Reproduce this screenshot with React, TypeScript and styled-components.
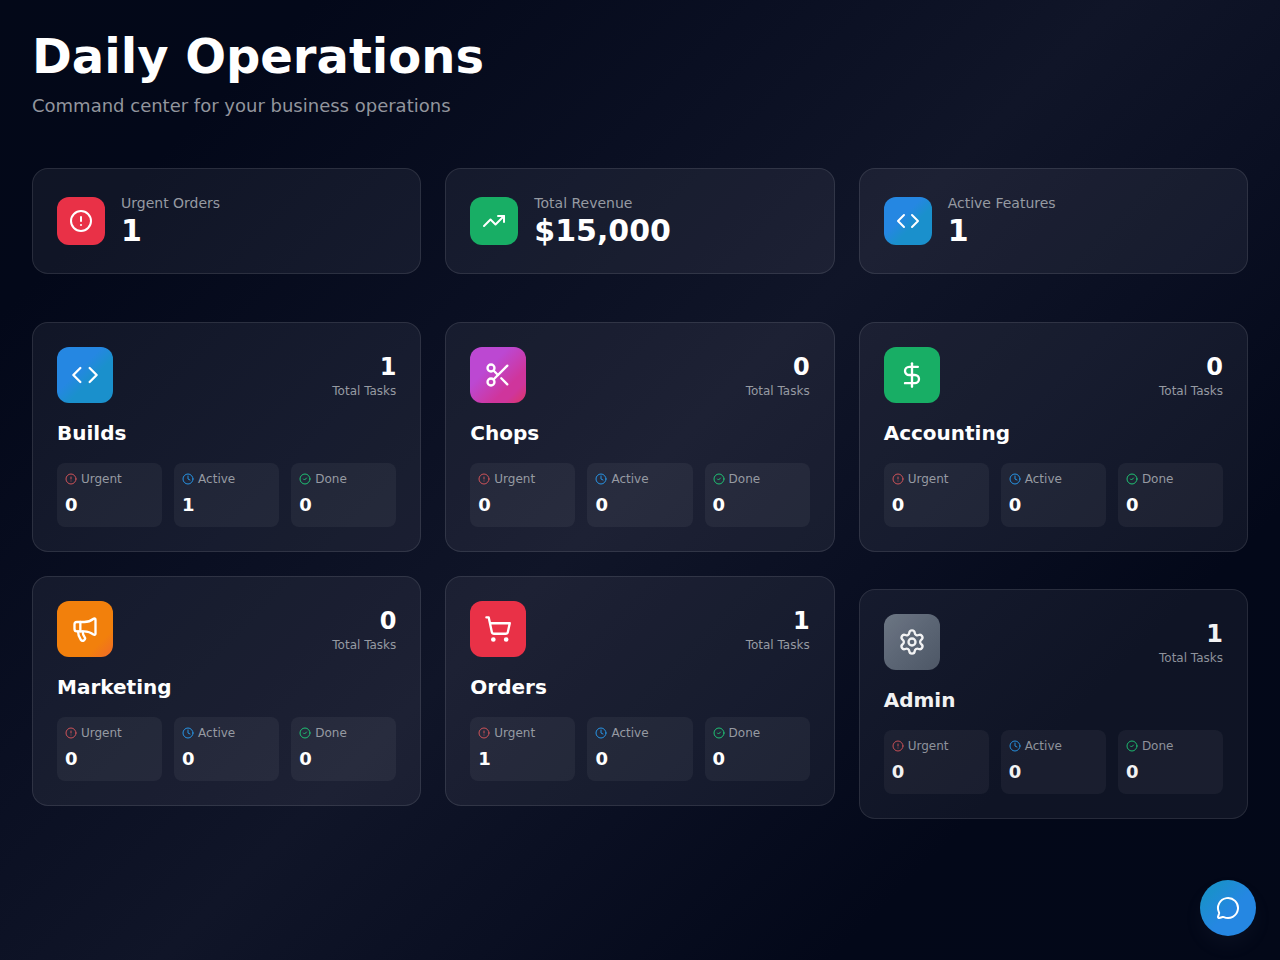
import React from "react";
import styled, { createGlobalStyle } from "styled-components";
import {
  CircleAlert,
  CircleCheck,
  Clock,
  Code,
  DollarSign,
  Megaphone,
  MessageCircle,
  Scissors,
  Settings,
  ShoppingCart,
  TrendingUp,
  type LucideIcon,
} from "lucide-react";

const tones = {
  red: "#e93147",
  green: "#18ae65",
  blue: "linear-gradient(135deg, #2587e2 0 40%, #1a90cc 60%)",
  purple: "linear-gradient(135deg, #bc48d2 0 35%, #cf359c 70% 80%, #dc3566)",
  orange: "linear-gradient(135deg, #f2800c 0 75%, #f06a2a)",
  gray: "linear-gradient(135deg, #737d8a, #626c7b 45%, #525c6b)",
};

type Tone = keyof typeof tones;

const GlobalStyle = createGlobalStyle`
  * {
    box-sizing: border-box;
  }

  body {
    margin: 0;
    background: #020617;
    color: #ffffff;
    font-family: "DejaVu Sans", sans-serif;
  }

  h1, h2, p, dl, dt, dd {
    margin: 0;
  }
`;

const Page = styled.main`
  display: flex;
  flex-direction: column;
  gap: 48px;
  min-height: 100vh;
  padding: 32px;
  background: linear-gradient(135deg, #030818 0%, #030819 14%, #0a0f22 34%, #101528 50%, #0a0f22 64%, #030819 80%, #030818 100%);
`;

const Header = styled.header`
  display: flex;
  flex-direction: column;
  gap: 12px;
`;

const Title = styled.h1`
  font-size: 48px;
  line-height: 48px;
  font-weight: 700;
`;

const Subtitle = styled.p`
  font-size: 18px;
  line-height: 28px;
  color: #92959d;
`;

const CardGrid = styled.section`
  display: grid;
  grid-template-columns: repeat(auto-fit, minmax(320px, 1fr));
  gap: 24px;
`;

const Card = styled.article<{ $entering?: boolean }>`
  padding: 24px;
  border: 1px solid rgba(255, 255, 255, 0.1);
  border-radius: 16px;
  background: rgba(240, 245, 255, 0.06);
  opacity: ${(p) => (p.$entering ? 0.95 : 1)};
  transform: ${(p) => (p.$entering ? "translateY(13px)" : "none")};
`;

const SummaryCard = styled(Card)`
  display: flex;
  align-items: center;
  gap: 16px;
`;

const IconTile = styled.div<{ $tone: Tone; $size: number }>`
  display: grid;
  place-items: center;
  flex: none;
  width: ${(p) => p.$size}px;
  height: ${(p) => p.$size}px;
  border-radius: 12px;
  background: ${(p) => tones[p.$tone]};
`;

const SummaryLabel = styled.p`
  font-size: 14px;
  line-height: 20px;
  color: #969aa2;
`;

const SummaryValue = styled.p`
  font-size: 30px;
  line-height: 36px;
  font-weight: 700;
`;

const TaskCard = styled(Card)`
  display: flex;
  flex-direction: column;
  gap: 16px;
`;

const TaskHead = styled.div`
  display: flex;
  align-items: center;
  justify-content: space-between;
`;

const Total = styled.div`
  text-align: right;
`;

const TotalValue = styled.p`
  font-size: 24px;
  line-height: 32px;
  font-weight: 700;
`;

const TotalLabel = styled.p`
  font-size: 12px;
  line-height: 16px;
  color: #969aa2;
`;

const TaskTitle = styled.h2`
  font-size: 20px;
  line-height: 28px;
  font-weight: 700;
`;

const Stats = styled.dl`
  display: grid;
  grid-template-columns: repeat(3, 1fr);
  gap: 12px;
`;

const Stat = styled.div`
  display: flex;
  flex-direction: column;
  gap: 4px;
  padding: 8px;
  border-radius: 8px;
  background: rgba(255, 255, 255, 0.05);
`;

const StatLabel = styled.dt`
  display: flex;
  align-items: center;
  gap: 4px;
  font-size: 12px;
  line-height: 16px;
  color: #969aa2;
`;

const StatValue = styled.dd`
  font-size: 18px;
  line-height: 28px;
  font-weight: 700;
`;

const ChatButton = styled.button`
  position: fixed;
  right: 24px;
  bottom: 24px;
  display: grid;
  place-items: center;
  width: 56px;
  height: 56px;
  padding: 0;
  border: 0;
  border-radius: 50%;
  color: #ffffff;
  background: linear-gradient(135deg, #1a90cc 20%, #2587e2 55%);
  box-shadow: 0 10px 20px rgba(120, 130, 160, 0.06);
  cursor: pointer;
`;

const summaries: { label: string; value: string; icon: LucideIcon; tone: Tone }[] = [
  { label: "Urgent Orders", value: "1", icon: CircleAlert, tone: "red" },
  { label: "Total Revenue", value: "$15,000", icon: TrendingUp, tone: "green" },
  { label: "Active Features", value: "1", icon: Code, tone: "blue" },
];

interface Department {
  name: string;
  icon: LucideIcon;
  tone: Tone;
  total: number;
  urgent: number;
  active: number;
  done: number;
  entering?: boolean;
}

const departments: Department[] = [
  { name: "Builds", icon: Code, tone: "blue", total: 1, urgent: 0, active: 1, done: 0 },
  { name: "Chops", icon: Scissors, tone: "purple", total: 0, urgent: 0, active: 0, done: 0 },
  { name: "Accounting", icon: DollarSign, tone: "green", total: 0, urgent: 0, active: 0, done: 0 },
  { name: "Marketing", icon: Megaphone, tone: "orange", total: 0, urgent: 0, active: 0, done: 0 },
  { name: "Orders", icon: ShoppingCart, tone: "red", total: 1, urgent: 1, active: 0, done: 0 },
  { name: "Admin", icon: Settings, tone: "gray", total: 1, urgent: 0, active: 0, done: 0, entering: true },
];

function DepartmentCard({ name, icon: Icon, tone, total, urgent, active, done, entering }: Department) {
  return (
    <TaskCard $entering={entering}>
      <TaskHead>
        <IconTile $tone={tone} $size={56}>
          <Icon size={28} />
        </IconTile>
        <Total>
          <TotalValue>{total}</TotalValue>
          <TotalLabel>Total Tasks</TotalLabel>
        </Total>
      </TaskHead>
      <TaskTitle>{name}</TaskTitle>
      <Stats>
        <Stat>
          <StatLabel>
            <CircleAlert size={12} color="#cf5359" />
            Urgent
          </StatLabel>
          <StatValue>{urgent}</StatValue>
        </Stat>
        <Stat>
          <StatLabel>
            <Clock size={12} color="#2795e6" />
            Active
          </StatLabel>
          <StatValue>{active}</StatValue>
        </Stat>
        <Stat>
          <StatLabel>
            <CircleCheck size={12} color="#1fc374" />
            Done
          </StatLabel>
          <StatValue>{done}</StatValue>
        </Stat>
      </Stats>
    </TaskCard>
  );
}

export default function App() {
  return (
    <>
      <GlobalStyle />
      <Page>
        <Header>
          <Title>Daily Operations</Title>
          <Subtitle>Command center for your business operations</Subtitle>
        </Header>
        <CardGrid aria-label="Summary">
          {summaries.map(({ label, value, icon: Icon, tone }) => (
            <SummaryCard key={label}>
              <IconTile $tone={tone} $size={48}>
                <Icon size={24} />
              </IconTile>
              <div>
                <SummaryLabel>{label}</SummaryLabel>
                <SummaryValue>{value}</SummaryValue>
              </div>
            </SummaryCard>
          ))}
        </CardGrid>
        <CardGrid aria-label="Departments">
          {departments.map((department) => (
            <DepartmentCard key={department.name} {...department} />
          ))}
        </CardGrid>
      </Page>
      <ChatButton type="button" aria-label="Open chat">
        <MessageCircle size={24} />
      </ChatButton>
    </>
  );
}
